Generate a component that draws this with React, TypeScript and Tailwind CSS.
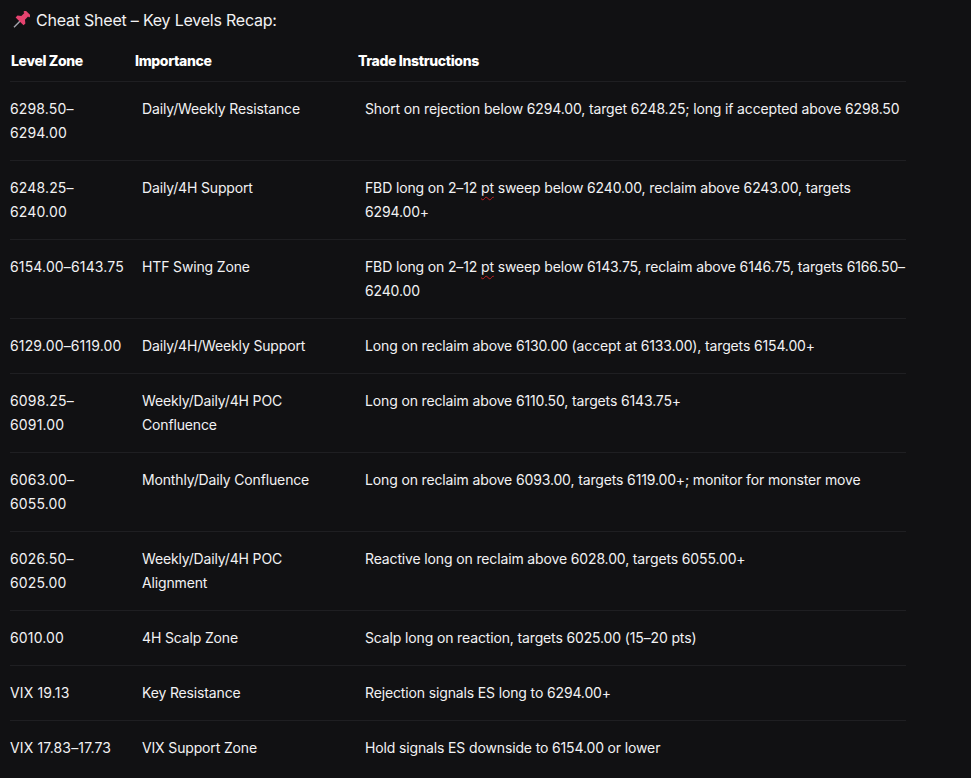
import React from 'react';

const rows: { zone: React.ReactNode; importance: string; trade: React.ReactNode }[] = [
    { zone: '6298.50–6294.00', importance: 'Daily/Weekly Resistance', trade: 'Short on rejection below 6294.00, target 6248.25; long if accepted above 6298.50' },
    {
        zone: '6248.25–6240.00',
        importance: 'Daily/4H Support',
        trade: <>FBD long on 2–12 <Typo>pt</Typo> sweep below 6240.00, reclaim above 6243.00, targets 6294.00+</>,
    },
    {
        zone: '6154.00–6143.75',
        importance: 'HTF Swing Zone',
        trade: <>FBD long on 2–12 <Typo>pt</Typo> sweep below 6143.75, reclaim above 6146.75, targets 6166.50–6240.00</>,
    },
    { zone: '6129.00–6119.00', importance: 'Daily/4H/Weekly Support', trade: 'Long on reclaim above 6130.00 (accept at 6133.00), targets 6154.00+' },
    { zone: '6098.25–6091.00', importance: 'Weekly/Daily/4H POC Confluence', trade: 'Long on reclaim above 6110.50, targets 6143.75+' },
    { zone: '6063.00–6055.00', importance: 'Monthly/Daily Confluence', trade: 'Long on reclaim above 6093.00, targets 6119.00+; monitor for monster move' },
    { zone: '6026.50–6025.00', importance: 'Weekly/Daily/4H POC Alignment', trade: 'Reactive long on reclaim above 6028.00, targets 6055.00+' },
    { zone: '6010.00', importance: '4H Scalp Zone', trade: 'Scalp long on reaction, targets 6025.00 (15–20 pts)' },
    { zone: 'VIX 19.13', importance: 'Key Resistance', trade: 'Rejection signals ES long to 6294.00+' },
    { zone: 'VIX 17.83–17.73', importance: 'VIX Support Zone', trade: 'Hold signals ES downside to 6154.00 or lower' },
];

function Typo({ children }: { children: React.ReactNode }) {
    return <span className="underline decoration-wavy decoration-[#c02020] decoration-1 underline-offset-[3px]">{children}</span>;
}

const Pin = () => (
    <svg width="18" height="18" viewBox="0 0 18 18" className="shrink-0 -ml-px">
        <g transform="rotate(45 9 9)">
            <rect x="8.4" y="10" width="1.4" height="9" fill="#a5a5ad" />
            <path d="M5 -1 H13 V1.6 H11.6 V6 L14.6 8.4 V11 H3.4 V8.4 L6.4 6 V1.6 H5 Z" fill="#e5436f" />
        </g>
    </svg>
);

export default function App() {
    return (
        <div className="min-h-[778px] bg-[#111113] pl-[10px] font-['Inter',sans-serif] text-sm tracking-[-0.15px] text-[#f2f2f3] overflow-hidden">
            <div className="flex items-center gap-[6px] pt-[10px] pl-[3px] h-[30px] text-base leading-5 tracking-[-0.22px]">
                <Pin />
                <span>Cheat Sheet – Key Levels Recap:</span>
            </div>

            <div className="w-[896px]">
                <div className="grid grid-cols-[125px_223px_1fr] h-[52px] pt-[19px] border-b border-[#1f1f22] font-extrabold leading-6 tracking-[-0.35px] text-white">
                    <div className="pl-px">Level Zone</div>
                    <div>Importance</div>
                    <div>Trade Instructions</div>
                </div>

                {rows.map((row, i) => (
                    <div key={i} className="grid grid-cols-[132px_223px_1fr] py-[15px] leading-6 border-b border-[#1f1f22] last:border-b-0">
                        <div className="pr-4 tracking-[0.15px]">{row.zone}</div>
                        <div className="pr-4">{row.importance}</div>
                        <div className="tracking-[-0.14px]">{row.trade}</div>
                    </div>
                ))}
            </div>
        </div>
    );
}
